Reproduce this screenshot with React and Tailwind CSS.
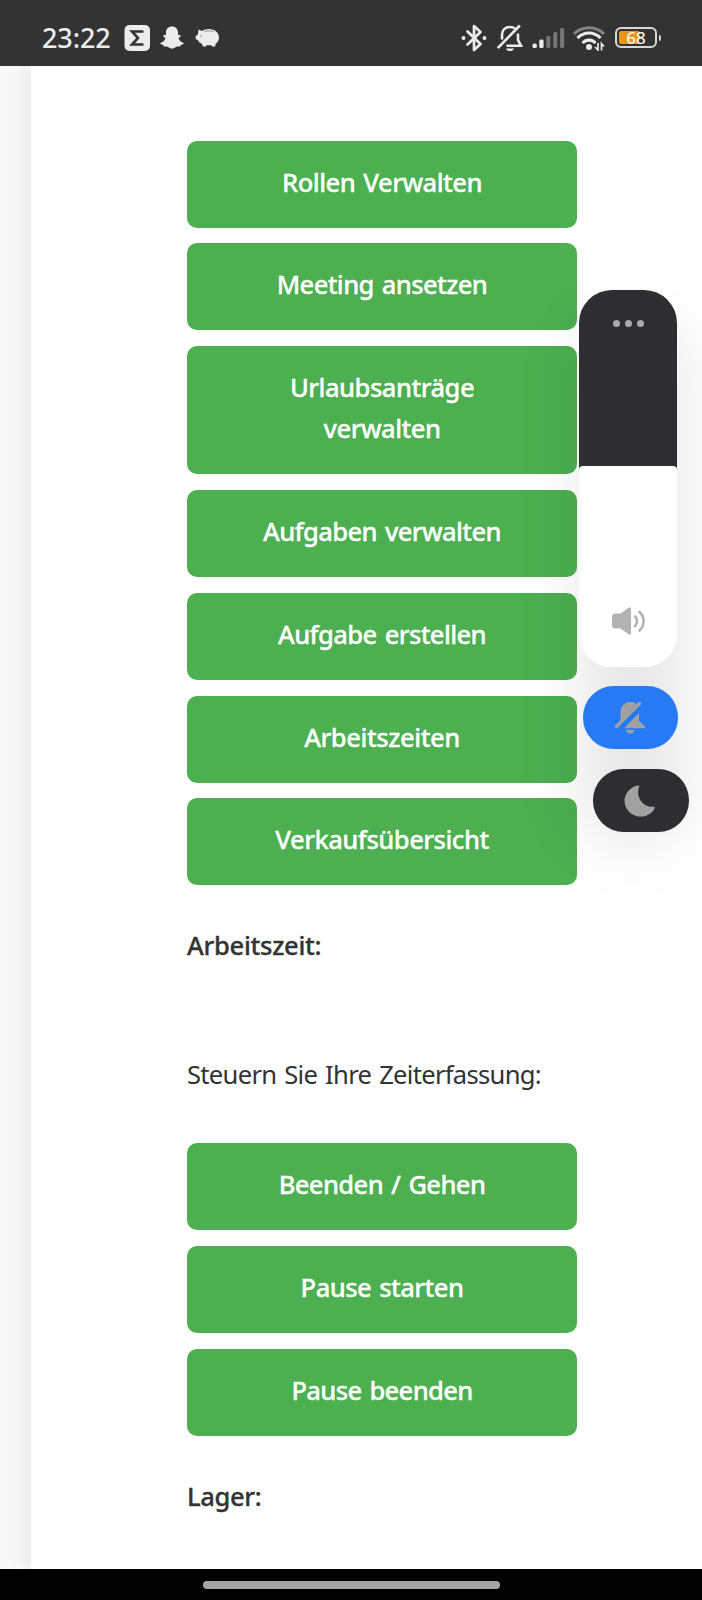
const actions = [
  { lines: ['Rollen Verwalten'], tracking: 'tracking-[-0.54px]' },
  { lines: ['Meeting ansetzen'], tracking: 'tracking-[-0.64px]' },
  { lines: ['Urlaubsanträge', 'verwalten'] },
  { lines: ['Aufgaben verwalten'], tracking: 'tracking-[-0.64px]' },
  { lines: ['Aufgabe erstellen'], tracking: 'tracking-[-0.64px]' },
  { lines: ['Arbeitszeiten'], tracking: 'tracking-[-0.46px]' },
  { lines: ['Verkaufsübersicht'] },
];

const timeActions = [
  { lines: ['Beenden / Gehen'], tracking: 'tracking-[-0.62px]' },
  { lines: ['Pause starten'], tracking: 'tracking-[-0.58px]' },
  { lines: ['Pause beenden'], tracking: 'tracking-[-0.68px]' },
];

function ActionButton({ lines, tracking = 'tracking-[-0.54px]' }) {
  return (
    <button className={`flex w-full flex-col items-center rounded-[10px] bg-[#4caf50] pt-[21px] pb-[25px] text-[25.6px] leading-[41px] font-medium text-white [-webkit-text-stroke:0.3px_#ffffff] [word-spacing:2px] ${tracking}`}>
      {lines.map((line) => (
        <span key={line}>{line}</span>
      ))}
    </button>
  );
}

function StatusBar() {
  return (
    <header className="flex h-[66px] w-full shrink-0 items-center bg-[#333333] pt-[9px] pl-[42px] text-[#ececec]">
      <span className="w-[82px] font-['Noto_Sans',sans-serif] text-[27px] leading-[36px] font-medium tracking-[-0.1px] whitespace-nowrap">23:22</span>
      <svg className="h-[26px] w-[26px]" viewBox="0 0 26 26">
        <rect x="0.5" y="0" width="25.5" height="26" rx="5" fill="#ececec" />
        <path d="M19.5 6.5H8l6 6.5-6 6.5h11.5" fill="none" stroke="#333" strokeWidth="2.6" />
      </svg>
      <svg className="ml-[10px] h-[23px] w-[24px]" viewBox="0 0 24 23" fill="#ececec">
        <path d="M12 .4c3.8 0 6.1 2.5 6.1 6.3v2.5c.7.3 1.7-.5 2.4.2.8.9-.7 1.8-2 2.6.6 2.3 2.2 3.9 4.7 4.7.8.3.5 1.3-.2 1.6-.9.5-1.8.5-2.2.8-.3.3-.1 1.2-.8 1.4-1 .2-1.9-.3-3 .1-1.5.5-2.6 2.1-5 2.1s-3.5-1.6-5-2.1c-1.1-.4-2 .1-3-.1-.7-.2-.5-1.1-.8-1.4-.4-.3-1.3-.3-2.2-.8-.7-.3-1-1.3-.2-1.6 2.5-.8 4.1-2.4 4.7-4.7-1.3-.8-2.8-1.7-2-2.6.7-.7 1.7.1 2.4-.2V6.7C5.9 2.9 8.2.4 12 .4Z" />
      </svg>
      <svg className="ml-[11px] h-[20px] w-[25px]" viewBox="0 0 25 20">
        <path d="M3.5 1.5l3.3 1.5C9 1.8 11.2 1 14 1c5.500 0 10 3.500 10 8.500 0 2.700-1.200 4.700-3.300 6.300l-.6 2.700h-3l-.6-1.200h-5l-.7 1.200h-3l-.7-2.500C5.200 15.200 3.800 14 3 12.300L.7 11V8L3 6.600Z" fill="#ececec" />
        <path d="M9.5 3.700c3-1.300 6-1.300 9 0" fill="none" stroke="#888" strokeWidth="1" />
        <circle cx="6" cy="8" r=".7" fill="#666" />
      </svg>
      <svg className="ml-[241px] h-[28px] w-[26px]" viewBox="0 0 26 28" fill="none" stroke="#ececec" strokeWidth="2.7" strokeLinejoin="round" strokeLinecap="round">
        <path d="M6.500 7.500l13 12.500-6.500 6V2l6.500 6L6.500 20.500" />
        <circle cx="2.500" cy="14" r="1.200" fill="#ececec" strokeWidth="1.500" />
        <circle cx="23.500" cy="14" r="1.200" fill="#ececec" strokeWidth="1.500" />
      </svg>
      <svg className="ml-[10px] h-[28px] w-[26px]" viewBox="0 0 26 28" fill="none" stroke="#ececec" strokeWidth="2.600">
        <path d="M5 15.500V11c0-5 3.300-8 8-8 2.100 0 3.700.6 5 1.500" />
        <path d="M21 9.500V16l3 5.800H9.500" />
        <path d="M.8 24L22.800 1.500" />
        <path d="M9 24.500h8c-.7 1.800-2.200 2.600-4 2.600S9.700 26.300 9 24.500Z" fill="#ececec" stroke="none" />
      </svg>
      <svg className="ml-[9px] h-[22px] w-[33px]" viewBox="0 0 33 22">
        <rect x="0.500" y="16.500" width="4.300" height="4.500" rx="1.500" fill="#ececec" />
        <rect x="7.300" y="12.500" width="4.300" height="8.500" rx="1.500" fill="#ececec" />
        <rect x="14.300" y="9" width="4" height="12" rx="1.500" fill="#777" />
        <rect x="21.300" y="5" width="4" height="16" rx="1.500" fill="#777" />
        <rect x="28.100" y="1" width="4" height="20" rx="1.500" fill="#777" />
      </svg>
      <svg className="ml-[7px] h-[26px] w-[34px]" viewBox="0 0 34 26" fill="none">
        <path d="M2 9C10 .8 24 .8 32 9" stroke="#858585" strokeWidth="3" />
        <path d="M5.500 13c6.500-6.700 16.500-6.700 23 0M10.500 18c3.700-3.800 9.300-3.800 13 0" stroke="#ececec" strokeWidth="3.200" />
        <circle cx="17" cy="22" r="3" fill="#ececec" />
        <path d="M26 18v7l-3-3M29.500 25.500v-7l2.500 3" stroke="#ececec" strokeWidth="1.700" />
      </svg>
      <div className="relative ml-[9px] flex h-[21px] w-[42px] items-center justify-center rounded-[6px] border-2 border-[#d8d8d8]">
        <div className="absolute top-[2px] left-[2px] h-[13px] w-[20px] rounded-l-[2px] bg-[#e5981b]" />
        <span className="relative font-['Noto_Sans',sans-serif] text-[17px] leading-[17px] font-medium text-[#fff4e0]">68</span>
        <div className="absolute top-[6px] -right-[6px] h-[6px] w-[2.500px] rounded-r-sm bg-[#d8d8d8]" />
      </div>
    </header>
  );
}

function VolumeOverlay() {
  return (
    <aside className="absolute top-[290px] left-[579px] w-[110px]">
      <div className="absolute top-[30px] left-0 h-[525px] w-[106px] rounded-[50px] bg-black/9 blur-[30px]" />
      <div className="relative flex h-[376.500px] w-[98px] flex-col overflow-hidden rounded-[33px] bg-[linear-gradient(#2e2e30_50%,#ffffff_50%)]">
        <div className="flex h-[175.500px] justify-center gap-[5px] pt-[30px]">
          <i className="h-[7px] w-[7px] rounded-full bg-[#aaaaaa]" />
          <i className="h-[7px] w-[7px] rounded-full bg-[#aaaaaa]" />
          <i className="h-[7px] w-[7px] rounded-full bg-[#aaaaaa]" />
        </div>
        <div className="flex flex-1 justify-center rounded-t-[4px] bg-white pt-[140px]">
          <svg className="h-[31px] w-[36px]" viewBox="0 0 36 31">
            <path d="M5.500 7.500H10.500L19 1.500Q21 .500 21 3V27.500Q21 29.500 19 28.500L10.500 22.500H5.500Q2 22.500 2 19V11Q2 7.500 5.500 7.500Z" fill="#b2b2b2" />
            <path d="M25 10.500c2.800 2.500 2.800 7 0 9.500M29.500 6c5.500 5 5.500 13.500 0 18.500" fill="none" stroke="#b2b2b2" strokeWidth="2.600" strokeLinecap="round" />
          </svg>
        </div>
      </div>
      <div className="relative mt-[19.500px] ml-[4px] flex h-[63px] w-[95px] items-center justify-center rounded-[31px] bg-[#267bf5]">
        <svg className="mr-[2px] h-[33px] w-[32px]" viewBox="0 0 32 33" fill="#a1a1a1">
          <path d="M6.500 21V12C6.500 5 10.500 1 16 1c2.600 0 4.600.700 6.200 2Z" />
          <path d="M25 12v8l5.500 5c1.300 1.400.500 2.300-.500 2.300H10Z" />
          <path d="M12 29h8.500c-.500 2.500-2.300 3.600-4.200 3.600S12.500 31.500 12 29Z" />
          <path d="M2.500 25.500L25.500 2.500" stroke="#a1a1a1" strokeWidth="3.400" strokeLinecap="round" />
          <path d="M5 27.500L27 5.500" stroke="#267bf5" strokeWidth="2" />
        </svg>
      </div>
      <div className="relative mt-[20px] ml-[14px] flex h-[63px] w-[96px] items-center justify-center rounded-[31px] bg-[#2e2e30]">
        <svg className="mr-[2px] h-[32px] w-[32px]" viewBox="0 0 32 32">
          <path d="M12.500.800C14.500 0 16 .500 15 2.300 11.500 11.500 18.500 22.500 29 21.800 31.500 21.500 31 23 30 24.500 23 35 7.500 33.500 2 22.500-2 14 2.500 4 12.500.800Z" fill="#a1a1a1" />
        </svg>
      </div>
    </aside>
  );
}

export default function App() {
  return (
    <div className="relative flex h-[1600px] w-[702px] flex-col overflow-hidden bg-[#f8f8f8] font-['Noto_Sans',sans-serif] text-[#333333]">
      <StatusBar />
      <div className="flex min-h-0 flex-1 overflow-hidden pl-[31px]">
        <main className="flex flex-1 flex-col bg-white pt-[74.700px] pl-[156px] shadow-[0_0_22px_rgba(0,0,0,0.11)]">
          <div className="flex w-[390px] flex-col gap-[15.800px]">
            {actions.map((a) => (
              <ActionButton key={a.lines[0]} {...a} />
            ))}
          </div>
          <h2 className="mt-[39.500px] text-[25.600px] leading-[41px] font-medium tracking-[-0.300px] [-webkit-text-stroke:0.3px_#333333]">Arbeitszeit:</h2>
          <p className="mt-[88px] text-[25.600px] leading-[41px] tracking-[-0.720px] [word-spacing:2px]">Steuern Sie Ihre Zeiterfassung:</p>
          <div className="mt-[48px] flex w-[390px] flex-col gap-[16px]">
            {timeActions.map((a) => (
              <ActionButton key={a.lines[0]} {...a} />
            ))}
          </div>
          <h2 className="mt-[40px] text-[25.600px] leading-[41px] font-medium tracking-[-0.400px] [-webkit-text-stroke:0.3px_#333333]">Lager:</h2>
        </main>
      </div>
      <footer className="flex h-[31px] w-full shrink-0 justify-center bg-black pt-[12px]">
        <div className="h-[8px] w-[297px] rounded-full bg-[#a6a6a6]" />
      </footer>
      <VolumeOverlay />
    </div>
  );
}
